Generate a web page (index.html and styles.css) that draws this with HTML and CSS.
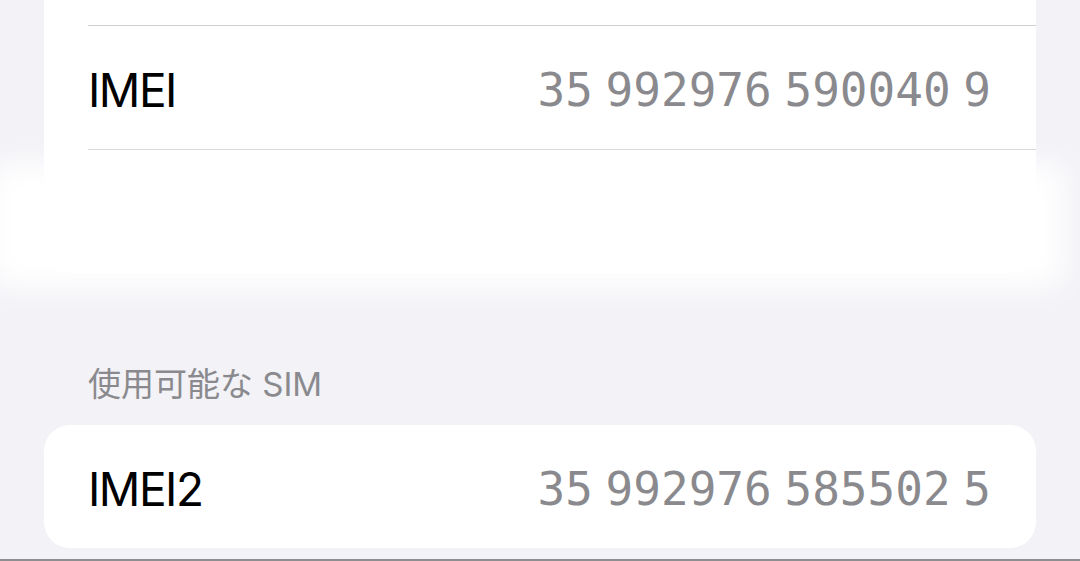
FILE: index.html
```html
<!DOCTYPE html>
<html lang="ja">
<head>
    <meta charset="UTF-8">
    <meta name="viewport" content="width=device-width, initial-scale=1.0">
    <title>情報</title>
    <link rel="stylesheet" href="styles.css">
</head>
<body>
    <div class="page">
        <!-- 上のグループ -->
        <div class="group group-top">
            <div class="row row-cut"></div>
            <div class="row">
                <span class="label">IMEI</span>
                <span class="value">35 992976 590040 9</span>
            </div>
            <div class="row row-hidden"></div>
        </div>

        <div class="section-title">使用可能な SIM</div>

        <div class="group">
            <div class="row row-first">
                <span class="label">IMEI2</span>
                <span class="value">35 992976 585502 5</span>
            </div>
        </div>

        <div class="shot-edge"></div>
    </div>

    <!-- ぼかし -->
    <div class="redact"></div>
</body>
</html>
```

FILE: styles.css
```css
* {
    margin: 0;
    padding: 0;
    box-sizing: border-box;
}

body {
    font-family: 'Inter', 'Noto Sans CJK JP', sans-serif;
    background: #f2f2f7;
    color: #000000;
    width: 1080px;
    height: 561px;
    overflow: hidden;
    position: relative;
}

.page {
    padding: 0 44px;
}

/* カード */
.group {
    background: #ffffff;
    border-radius: 26px;
    overflow: hidden;
}

.group-top {
    border-radius: 0 0 26px 26px;
}

.row {
    display: flex;
    align-items: center;
    justify-content: space-between;
    height: 124px;
    margin-left: 44px;
    padding: 4px 45px 0 0;
    border-top: 1px solid #cfcfd3;
}

.row-cut {
    height: 25px;
    border-top: none;
}

.row-first {
    height: 123px;
    border-top: none;
}

.label {
    font-size: 46px;
    letter-spacing: -1.5px;
}

.value {
    font-family: 'DejaVu Sans Mono', monospace;
    font-size: 46px;
    word-spacing: -15px;
    color: #8a8a8e;
}

/* セクション見出し */
.section-title {
    padding: 88px 0 18px 44px;
    line-height: 46px;
    font-size: 33px;
    color: #8a8a8e;
}

.shot-edge {
    margin: 11px -44px 0;
    border-top: 2px solid #8e8e90;
}

.redact {
    position: absolute;
    top: 162px;
    left: -12px;
    width: 1078px;
    height: 126px;
    background: #ffffff;
    filter: blur(16px);
}
```
